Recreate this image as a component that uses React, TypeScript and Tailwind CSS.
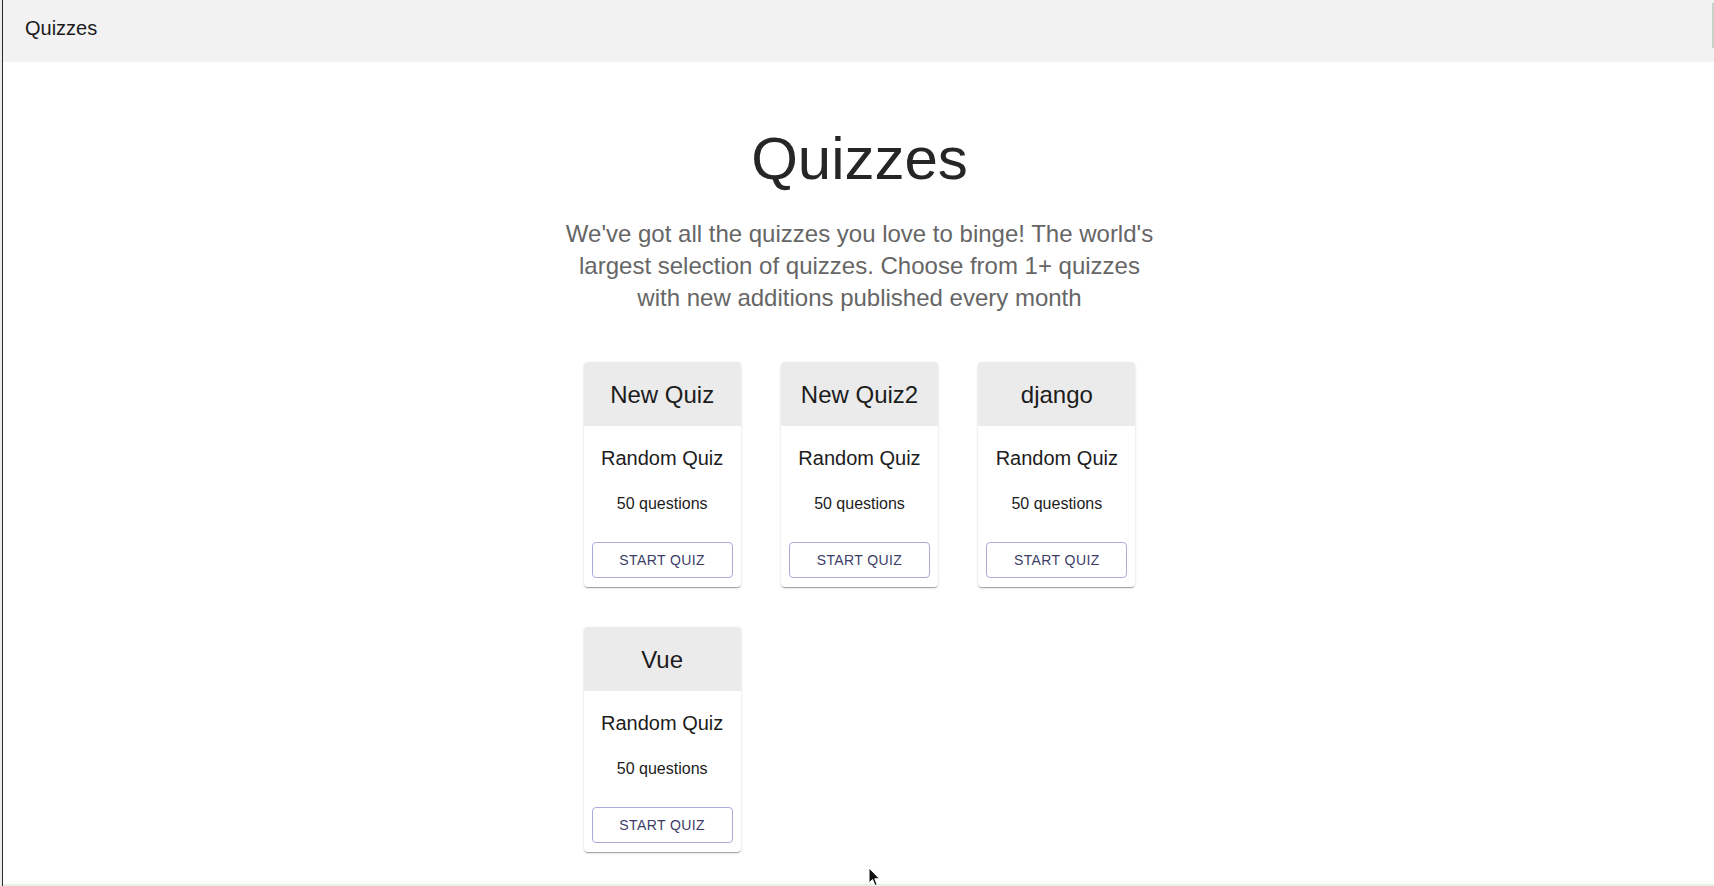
import React from "react";

const quizzes = [
  { title: "New Quiz" },
  { title: "New Quiz2" },
  { title: "django" },
  { title: "Vue" },
];

function QuizCard({ title }: { title: string }) {
  return (
    <div className="flex flex-col overflow-hidden rounded-[4px] bg-white shadow-[0_2px_1px_-1px_rgba(0,0,0,0.2),0_1px_1px_0_rgba(0,0,0,0.14),0_1px_3px_0_rgba(0,0,0,0.12)]">
      <div className="flex h-[64px] items-center justify-center bg-[#ebebeb] pt-[1px]">
        <span className="text-[24px] leading-[32px] text-[#1c1c1c]">{title}</span>
      </div>
      <div className="flex flex-col items-center pt-[16px] pb-[18px]">
        <div className="text-[20px] leading-[32px] text-[#1c1c1c]">Random Quiz</div>
        <div className="mt-[18px] text-[16px] leading-[24px] text-[#1c1c1c]">50 questions</div>
      </div>
      <div className="px-[8px] pt-[8px] pb-[9px]">
        <button className="flex h-[36px] w-full items-center justify-center rounded-[4px] border border-[#a9acdb] bg-white text-[14px] uppercase tracking-[0.4px] text-[#3b3d68]">
          Start Quiz
        </button>
      </div>
    </div>
  );
}

export default function App() {
  return (
    <div className="relative h-[886px] w-full overflow-hidden border-l-[2px] border-[#ececec] bg-white font-['Liberation_Sans',Arial,sans-serif]">
      <div className="flex h-full flex-col border-l border-[#2a2a2a]">
        <header className="h-[62px] shrink-0 bg-[#f2f2f2] pl-[22px] pt-[12px]">
          <span className="text-[20px] leading-[32px] text-[#1c1c1c]">Quizzes</span>
        </header>
        <main className="flex flex-1 flex-col items-center pl-[2px] pt-[61px]">
          <h1 className="mb-[23px] text-[60px] font-light leading-[72px] text-[#262626]">Quizzes</h1>
          <p className="w-[600px] text-center text-[24px] leading-[32px] text-[#666666]">
            We've got all the quizzes you love to binge! The world's largest selection of quizzes. Choose from 1+ quizzes with new additions published every month
          </p>
          <div className="mt-[48px] grid w-[552px] grid-cols-3 gap-x-[40px] gap-y-[40px]">
            {quizzes.map((q) => (
              <QuizCard key={q.title} title={q.title} />
            ))}
          </div>
        </main>
        <div className="h-[2px] shrink-0 bg-[#e4f3e4]" />
      </div>
      <div className="absolute right-0 top-[3px] h-[45px] w-[2px] bg-[#c9d2c9]" />
      <svg className="absolute left-[866px] top-[867px]" width="13" height="20" viewBox="0 0 13 20">
        <path d="M1 1 L1 16 L4.5 12.5 L7 18.5 L9.2 17.6 L6.8 11.8 L11.5 11.8 Z" fill="#111" stroke="#fff" strokeWidth="1" />
      </svg>
    </div>
  );
}
